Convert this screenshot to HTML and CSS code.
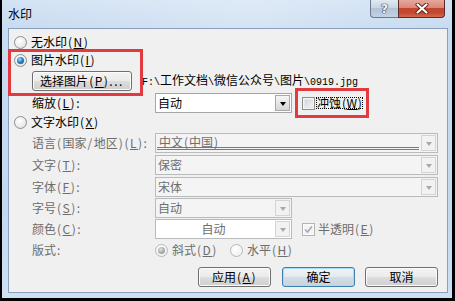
FILE: index.html
```html
<!DOCTYPE html>
<html lang="zh-CN">
<head>
<meta charset="utf-8">
<title>水印</title>
<link rel="stylesheet" href="styles.css">
</head>
<body>
<div class="window">
  <div class="titlebar">
    <span class="title">水印</span>
    <div class="caption">
      <div class="cap help"><span>?</span></div>
      <div class="cap close">
        <svg width="14" height="11" viewBox="0 0 14 11"><path d="M2.5 1.5 L11.5 9.5 M11.5 1.5 L2.5 9.5" stroke="#5a2018" stroke-width="4" stroke-linecap="round" fill="none"/><path d="M2.5 1.5 L11.5 9.5 M11.5 1.5 L2.5 9.5" stroke="#ffffff" stroke-width="2.2" stroke-linecap="round" fill="none"/></svg>
      </div>
    </div>
  </div>
  <div class="client">
    <div class="row r1 opt"><span class="radio"></span><span class="txt">无水印<span class="k">(<u>N</u>)</span></span></div>
    <div class="row r2 opt"><span class="radio on"></span><span class="txt">图片水印<span class="k">(<u>I</u>)</span></span></div>
    <div class="row r3 ind">
      <div class="btn pick">选择图片<span class="k">(<u>P</u>)...</span></div>
      <span class="path"><span class="mono">F:\</span>工作文档<span class="mono">\</span>微信公众号<span class="mono">\</span>图片<span class="mono">\0919.jpg</span></span>
    </div>
    <div class="row r4 ind">
      <span class="lab">缩放<span class="k">(<u>L</u>):</span></span>
      <div class="combo short"><span class="ctext">自动</span><span class="drop"><i class="arrow"></i></span></div>
      <span class="check"></span><span class="focus">冲蚀<span class="k">(<u>W</u>)</span></span>
    </div>
    <div class="row r5 opt"><span class="radio"></span><span class="txt">文字水印<span class="k">(<u>X</u>)</span></span></div>
    <div class="row r6 ind dis">
      <span class="lab">语言<span class="k">(</span>国家<span class="k">/</span>地区<span class="k">)(<u>L</u>):</span></span>
      <div class="combo long off"><span class="ctext dbl">中文<span class="k">(</span>中国<span class="k">)</span></span><span class="drop"><i class="arrow"></i></span></div>
    </div>
    <div class="row r7 ind dis">
      <span class="lab">文字<span class="k">(<u>T</u>):</span></span>
      <div class="combo long off"><span class="ctext">保密</span><span class="drop"><i class="arrow"></i></span></div>
    </div>
    <div class="row r8 ind dis">
      <span class="lab">字体<span class="k">(<u>F</u>):</span></span>
      <div class="combo long off"><span class="ctext">宋体</span><span class="drop"><i class="arrow"></i></span></div>
    </div>
    <div class="row r9 ind dis">
      <span class="lab">字号<span class="k">(<u>S</u>):</span></span>
      <div class="combo short off"><span class="ctext">自动</span><span class="drop"><i class="arrow"></i></span></div>
    </div>
    <div class="row r10 ind dis">
      <span class="lab">颜色<span class="k">(<u>C</u>):</span></span>
      <div class="combo short off white"><span class="ctext center">自动</span><span class="drop"><i class="arrow"></i></span></div>
      <span class="check off on"><svg width="9" height="9" viewBox="0 0 9 9"><path d="M1 4.5 L3.5 7 L8 1.5" stroke="#a8a8a8" stroke-width="1.6" fill="none"/></svg></span><span class="txt2">半透明<span class="k">(<u>E</u>)</span></span>
    </div>
    <div class="row r11 ind dis">
      <span class="lab">版式<span class="k">:</span></span>
      <span class="radio off on"></span><span class="txt">斜式<span class="k">(<u>D</u>)</span></span>
      <span class="radio off second"></span><span class="txt">水平<span class="k">(<u>H</u>)</span></span>
    </div>
    <div class="row r12 buttons">
      <div class="btn">应用<span class="k">(<u>A</u>)</span></div>
      <div class="btn def">确定</div>
      <div class="btn">取消</div>
    </div>
  </div>
  <div class="mark mark1"></div>
  <div class="mark mark2"></div>
</div>
</body>
</html>
```
FILE: styles.css
```css
* { box-sizing: border-box; }
html, body { margin: 0; padding: 0; }
body {
  background: #000;
  width: 455px;
  height: 301px;
  overflow: hidden;
  font: 12px/14px "Noto Sans CJK SC", "Noto Sans", sans-serif;
  color: #000;
}
u { text-decoration: underline; text-underline-offset: 1px; }
.k { letter-spacing: 1.5px; padding-left: 1px; }

.window {
  position: relative;
  margin-left: 2px;
  width: 450px;
  height: 298px;
  background: linear-gradient(to bottom, #d4e3f4 0, #c8dbf0 28px, #c3d7ee 70%, #cfe0f3 100%);
}

.titlebar {
  height: 28px;
  display: flex;
  justify-content: space-between;
  align-items: flex-start;
  background: linear-gradient(90deg, rgba(255,255,255,0) 0%, rgba(255,255,255,0.25) 55%, rgba(255,255,255,0.1) 80%, rgba(255,255,255,0) 100%);
}
.title {
  margin: 7px 0 0 6px;
  font-size: 12px;
  line-height: 14px;
}
.caption { display: flex; margin-right: 7px; }
.cap {
  height: 18px;
  display: flex;
  align-items: center;
  justify-content: center;
  border: 1px solid #6a7a90;
  border-top: none;
}
.help {
  width: 28px;
  border-right: none;
  border-bottom-left-radius: 4px;
  background: linear-gradient(to bottom, #e0e8f1 0%, #cad6e4 45%, #b3c3d7 50%, #c3d2e3 100%);
}
.help span {
  font: bold 13px/14px "DejaVu Sans", sans-serif;
  color: #eef3f8;
  text-shadow: 0 0 1px #253447, 0 0 1px #253447, 0 0 1px #253447;
}
.close {
  width: 47px;
  border-color: #5e2c26;
  border-bottom-right-radius: 4px;
  background: linear-gradient(to bottom, #e6a99c 0%, #d9887a 45%, #c6452f 50%, #c34833 75%, #d5684c 100%);
}

.client {
  margin-left: 6px;
  width: 440px;
  height: 265px;
  border: 1px solid #8a9fbb;
  background: #f0f0f0;
  display: flex;
  flex-direction: column;
}

.row { display: flex; align-items: center; flex: none; }
.opt { padding-left: 5px; height: 18px; }
.ind { padding-left: 23px; }
.r1 { margin-top: 4px; }
.r3 { margin-top: 2px; height: 20px; }
.r4 { margin-top: 2px; height: 20px; }
.r6 { margin-top: 2px; height: 20px; }
.r7 { margin-top: 2px; height: 20px; }
.r8 { margin-top: 2px; height: 20px; }
.r9 { margin-top: 1px; height: 20px; }
.r10 { margin-top: 1px; height: 20px; }
.r11 { margin-top: 2px; height: 18px; }
.r12 { margin-top: 8px; height: 20px; }

.txt { margin-left: 4px; white-space: nowrap; }
.dis { color: #6d6d6d; }
.lab { width: 123px; flex: none; white-space: nowrap; }

/* radio */
.radio {
  width: 13px;
  height: 13px;
  flex: none;
  border-radius: 50%;
  border: 1px solid #8c8e90;
  background: radial-gradient(circle at 40% 35%, #ffffff 0%, #ececec 55%, #d2d4d6 100%);
  position: relative;
}
.radio.on::after {
  content: "";
  position: absolute;
  left: 2px;
  top: 2px;
  width: 7px;
  height: 7px;
  border-radius: 50%;
  background: radial-gradient(circle at 40% 35%, #a6e2fb 0%, #2a82c0 45%, #10406f 100%);
}
.radio.off { border-color: #b6b8ba; background: radial-gradient(circle at 40% 35%, #ffffff 0%, #f4f4f4 60%, #e4e4e4 100%); }
.radio.off.on::after { background: radial-gradient(circle at 40% 35%, #e2e2e2 0%, #a9a9a9 55%, #8e8e8e 100%); }
.radio.second { margin-left: 12px; }

/* checkbox */
.check {
  width: 13px;
  height: 13px;
  flex: none;
  margin-left: 10px;
  border: 1px solid #8e8f8f;
  background: linear-gradient(135deg, #c9ccd1 0%, #e6e7e9 55%, #f6f6f6 100%);
  box-shadow: inset 0 0 0 1px #f4f4f4, inset 0 0 0 2px #e8e8e8;
  display: flex;
  align-items: center;
  justify-content: center;
}
.check.off { border-color: #b4b4b4; background: #f4f4f4; box-shadow: inset 0 0 0 1px #fbfbfb; }
.focus {
  margin-left: 1px;
  padding: 0 1px;
  outline: 1px dotted #000;
  outline-offset: -1px;
  white-space: nowrap;
  line-height: 12px;
}
.focus .k { letter-spacing: 0.5px; padding-left: 1px; }
.txt2 { margin-left: 3px; white-space: nowrap; }

/* combo */
.combo {
  height: 20px;
  flex: none;
  display: flex;
  border: 1px solid #a2a5a9;
  background: #fff;
}
.combo.short { width: 137px; }
.combo.long { width: 283px; }
.ctext {
  flex: 1;
  padding-left: 2px;
  line-height: 16px;
  white-space: nowrap;
  margin: 1px 0;
}
.ctext .k { letter-spacing: 1px; }
.ctext.center { text-align: center; padding-left: 0; padding-right: 4px; }
.ctext.dbl {
  margin: 1px 2px 2px 1px;
  border-bottom: 3px double #7a7a7a;
  line-height: 13px;
}
.drop {
  width: 15px;
  margin: 1px 1px 1px 0;
  border: 1px solid #a8a8a8;
  background: linear-gradient(to bottom, #f6f6f6 0%, #e6e6e6 50%, #d6d6d6 100%);
  display: flex;
  align-items: center;
  justify-content: center;
}
.arrow {
  display: block;
  width: 0;
  height: 0;
  border-left: 3.5px solid transparent;
  border-right: 3.5px solid transparent;
  border-top: 4px solid #000;
  margin-top: 2px;
}
.combo.off { border-color: #b8babc; background: #f4f4f4; }
.combo.off.white { background: #fff; }
.combo.off .drop { border-color: #d4d4d4; background: #f2f2f2; }
.combo.off .arrow { border-top-color: #a8a8a8; }

/* buttons */
.btn {
  height: 20px;
  flex: none;
  border: 1px solid #707070;
  border-radius: 3px;
  background: linear-gradient(to bottom, #f3f3f3 0%, #ebebeb 48%, #dddddd 52%, #cfcfcf 100%);
  box-shadow: inset 0 0 0 1px #fbfbfb;
  display: flex;
  align-items: center;
  justify-content: center;
  white-space: nowrap;
  line-height: 14px;
}
.pick { width: 100px; }
.pick .k { letter-spacing: 1.5px; }
.path { margin-left: 10px; white-space: nowrap; }
.mono { font: 10px/14px "Liberation Mono", monospace; }

.buttons { justify-content: flex-end; padding-right: 9px; }
.buttons .btn { width: 73px; }
.buttons .btn + .btn { margin-left: 11px; }
.buttons .btn:last-child { margin-left: 10px; }
.btn.def {
  border-color: #3c7fb1;
  box-shadow: inset 0 0 0 1px #a6dcf5;
  background: linear-gradient(to bottom, #eef3f6 0%, #e4ebf0 48%, #d4dde4 52%, #c8d3dc 100%);
}

/* annotation overlays */
.mark {
  position: absolute;
  border: 3px solid #e23b3f;
  pointer-events: none;
}
.mark1 { left: 6px; top: 49px; width: 135px; height: 47px; }
.mark2 { left: 293px; top: 88px; width: 74px; height: 30px; }
```
